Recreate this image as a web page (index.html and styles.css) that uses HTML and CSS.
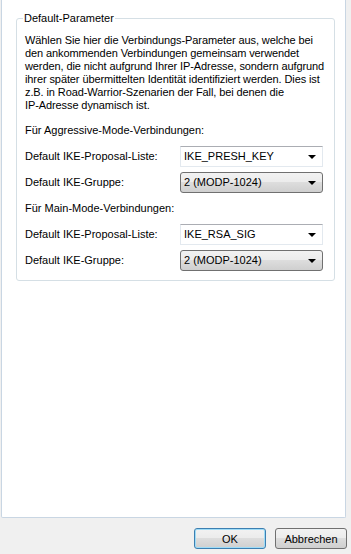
FILE: index.html
```html
<!DOCTYPE html>
<html lang="de">
<head>
    <meta charset="UTF-8">
    <title>Default-Parameter</title>
    <link rel="stylesheet" href="styles.css">
</head>
<body>
    <div class="window">
        <div class="panel">
            <fieldset class="group">
                <legend>Default-Parameter</legend>
                <p class="info">Wählen Sie hier die Verbindungs-Parameter aus, welche bei<br>
                den ankommenden Verbindungen gemeinsam verwendet<br>
                werden, die nicht aufgrund Ihrer IP-Adresse, sondern aufgrund<br>
                ihrer später übermittelten Identität identifiziert werden. Dies ist<br>
                z.B. in Road-Warrior-Szenarien der Fall, bei denen die<br>
                IP-Adresse dynamisch ist.</p>

                <div class="section-title">Für Aggressive-Mode-Verbindungen:</div>
                <div class="row">
                    <span class="label">Default IKE-Proposal-Liste:</span>
                    <div class="combo edit">IKE_PRESH_KEY<span class="arrow"></span></div>
                </div>
                <div class="row">
                    <span class="label">Default IKE-Gruppe:</span>
                    <div class="combo list">2 (MODP-1024)<span class="arrow"></span></div>
                </div>

                <div class="section-title">Für Main-Mode-Verbindungen:</div>
                <div class="row">
                    <span class="label">Default IKE-Proposal-Liste:</span>
                    <div class="combo edit">IKE_RSA_SIG<span class="arrow"></span></div>
                </div>
                <div class="row">
                    <span class="label">Default IKE-Gruppe:</span>
                    <div class="combo list">2 (MODP-1024)<span class="arrow"></span></div>
                </div>
            </fieldset>
        </div>
        <div class="actions">
            <button class="btn default">OK</button>
            <button class="btn">Abbrechen</button>
        </div>
    </div>
</body>
</html>
```

FILE: styles.css
```css
body {
    margin: 0;
    padding: 0;
    font-family: 'Liberation Sans', Arial, sans-serif;
    font-size: 11px;
    line-height: 13px;
    color: #000;
    background-color: #f0f0f0;
}
.window {
    width: 351px;
    height: 554px;
    display: flex;
    flex-direction: column;
}
.panel {
    width: 345px;
    height: 518px;
    margin-left: 1px;
    background-color: #fff;
    border: 1px solid #c9d6e3;
    border-top: none;
    border-radius: 0 0 2px 2px;
    padding-top: 12px;
    box-sizing: border-box;
}
.group {
    margin: 0 10px 0 14px;
    padding: 0 8px 9px 8px;
    border: 1px solid #d5dfe5;
    border-radius: 3px;
}
.group legend {
    padding: 0 1px;
    margin-left: -2px;
}
.info {
    margin: 9px 0 12px 0;
    white-space: nowrap;
    letter-spacing: -0.1px;
}
.section-title {
    height: 13px;
    margin-bottom: 9px;
}
.row {
    display: flex;
    align-items: center;
    height: 21px;
    margin-bottom: 5px;
}
.row + .section-title {
    margin-top: 9px;
}
.row:last-child {
    margin-bottom: 0;
}
.label {
    width: 155px;
}
.combo {
    position: relative;
    width: 143px;
    height: 21px;
    box-sizing: border-box;
    padding: 0 3px;
    display: flex;
    align-items: center;
}
.combo.edit {
    background-color: #fff;
    border: 1px solid #e3e9ef;
    border-top-color: #abadb3;
}
.combo.list {
    border: 1px solid #707070;
    border-radius: 3px;
    background: linear-gradient(#f2f2f2, #ebebeb 50%, #dddddd 50%, #cfcfcf);
}
.arrow {
    position: absolute;
    right: 6px;
    top: 8px;
    width: 0;
    height: 0;
    border-left: 4px solid transparent;
    border-right: 4px solid transparent;
    border-top: 4px solid #000;
}
.actions {
    display: flex;
    justify-content: flex-end;
    gap: 9px;
    padding: 10px 4px 0 0;
}
.btn {
    width: 72px;
    height: 21px;
    padding: 0;
    font-family: 'Liberation Sans', Arial, sans-serif;
    font-size: 11px;
    color: #000;
    border: 1px solid #707070;
    border-radius: 3px;
    background: linear-gradient(#f2f2f2, #ebebeb 50%, #dddddd 50%, #cfcfcf);
}
.btn.default {
    border-color: #3c7fb1;
    box-shadow: inset 0 0 0 1px #9fdcf7;
}
```
